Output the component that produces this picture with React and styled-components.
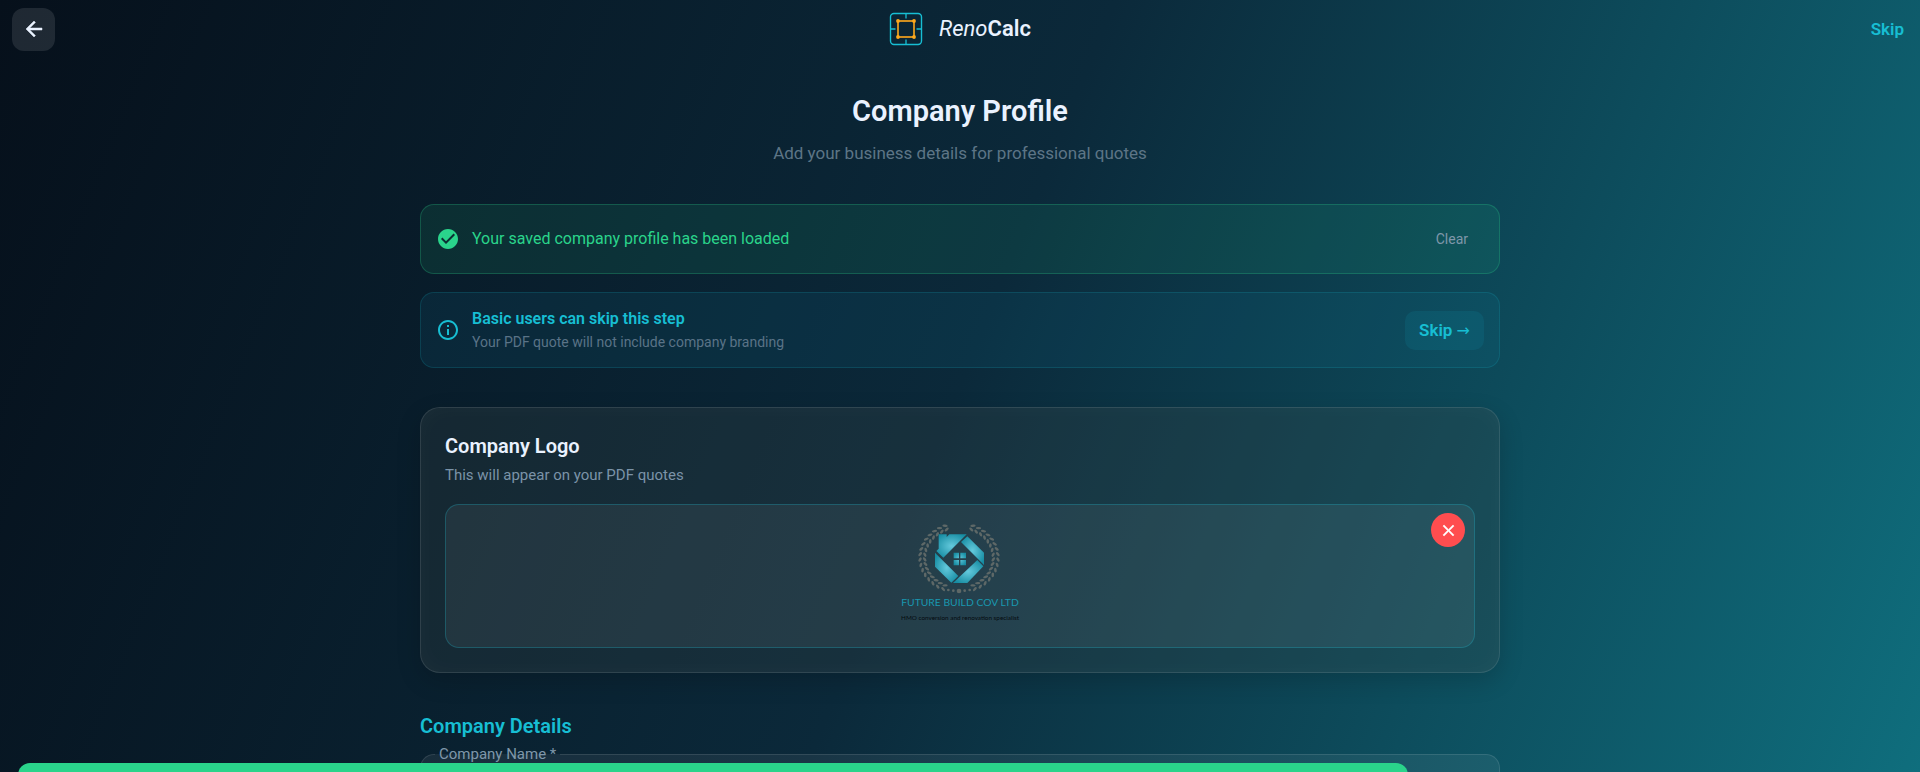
import React from 'react';
import styled, { createGlobalStyle } from 'styled-components';
import { MdArrowBack, MdCheckCircle, MdClose, MdInfoOutline } from 'react-icons/md';

const GlobalStyle = createGlobalStyle`
  * {
    box-sizing: border-box;
  }

  body {
    margin: 0;
    font-family: Roboto, 'Liberation Sans', sans-serif;
    color: #eaf2ff;
  }

  button, input {
    font-family: inherit;
  }
`;

const Page = styled.div`
  height: 100vh;
  overflow: hidden;
  background: linear-gradient(112deg, #06101b 0%, #0b293a 50%, #0f6e7d 100%);
`;

const Header = styled.header`
  display: grid;
  grid-template-columns: 1fr auto 1fr;
  align-items: center;
  height: 58px;
  padding: 0 12px;
`;

const BackButton = styled.button`
  display: flex;
  align-items: center;
  justify-content: center;
  width: 43px;
  height: 43px;
  padding: 0;
  border: none;
  border-radius: 12px;
  background: rgba(255, 255, 255, 0.1);
  color: #eaf2ff;
  font-size: 24px;
  cursor: pointer;

  path:last-child {
    stroke: currentColor;
    stroke-width: 0.5;
  }
`;

const Brand = styled.div`
  display: flex;
  align-items: center;
  gap: 16px;
`;

const BrandName = styled.span`
  font-size: 22px;
  line-height: 28px;
  font-weight: 600;

  em {
    font-weight: 400;
  }
`;

const SkipLink = styled.a`
  justify-self: end;
  padding: 4px;
  font-size: 17px;
  font-weight: 600;
  color: #17bed3;
  text-decoration: none;
`;

const Main = styled.main`
  max-width: 1112px;
  margin: 0 auto;
  padding: 33px 16px;
`;

const Title = styled.h1`
  margin: 0;
  font-size: 29px;
  line-height: 40px;
  font-weight: 600;
  text-align: center;
`;

const Subtitle = styled.p`
  margin: 11px 0 40px;
  font-size: 17px;
  line-height: 22px;
  text-align: center;
  color: #5d7586;
`;

const tones = {
  success: { color: '#2ad48b', fill: 'rgba(42, 212, 139, 0.1)', line: 'rgba(42, 212, 139, 0.25)' },
  info: { color: '#17bed3', fill: 'rgba(20, 135, 172, 0.11)', line: 'rgba(23, 190, 211, 0.16)' },
};

const Notice = styled.section`
  display: flex;
  align-items: center;
  gap: 12px;
  min-height: ${({ $tone }) => ($tone === 'info' ? '76px' : '70px')};
  padding: 10px 15px;
  border: 1px solid ${({ $tone }) => tones[$tone].line};
  border-radius: 14px;
  background: ${({ $tone }) => tones[$tone].fill};
  color: ${({ $tone }) => tones[$tone].color};

  & + & {
    margin-top: 18px;
  }

  > svg {
    flex: none;
    font-size: 24px;
  }
`;

const NoticeBody = styled.div`
  flex: 1;
`;

const NoticeText = styled.p`
  margin: 0;
  font-size: 16px;
  line-height: 24px;
  font-weight: ${({ $strong }) => ($strong ? 600 : 400)};
`;

const NoticeHint = styled.p`
  margin: 0;
  font-size: 14px;
  line-height: 22px;
  color: #5a7387;
`;

const ClearButton = styled.button`
  padding: 8px 16px;
  border: none;
  background: none;
  color: #7f97aa;
  font-size: 14px;
  cursor: pointer;
`;

const SkipButton = styled.button`
  height: 39px;
  padding: 0 14px;
  border: none;
  border-radius: 10px;
  background: rgba(23, 190, 211, 0.1);
  color: #17bed3;
  font-size: 17px;
  font-weight: 600;
  cursor: pointer;

  span {
    font-family: 'DejaVu Sans', sans-serif;
    font-size: 16px;
    font-weight: 400;
  }
`;

const Card = styled.section`
  margin-top: 39px;
  padding: 24px;
  border: 1px solid rgba(255, 255, 255, 0.11);
  border-radius: 20px;
  background: rgba(60, 70, 73, 0.25);
  box-shadow: 0 8px 24px rgba(0, 0, 0, 0.16), inset 0 0 24px rgba(255, 255, 255, 0.03);
`;

const CardTitle = styled.h2`
  margin: 0;
  font-size: 20px;
  line-height: 28px;
  font-weight: 600;
`;

const CardHint = styled.p`
  margin: 3px 0 17px;
  font-size: 15px;
  line-height: 24px;
  color: #7b93a8;
`;

const LogoBox = styled.div`
  position: relative;
  display: flex;
  justify-content: center;
  padding: 16px;
  border: 1px solid rgba(23, 190, 211, 0.27);
  border-radius: 14px;
  background: rgba(255, 255, 255, 0.06);
`;

const RemoveButton = styled.button`
  position: absolute;
  top: 8px;
  right: 9px;
  display: flex;
  align-items: center;
  justify-content: center;
  width: 34px;
  height: 34px;
  padding: 0;
  border: none;
  border-radius: 50%;
  background: #ff4d4f;
  color: #fff;
  font-size: 19px;
  cursor: pointer;

  path:last-child {
    stroke: currentColor;
    stroke-width: 0.6;
  }
`;

const SectionTitle = styled.h2`
  margin: 39px 0 4px;
  font-size: 20px;
  line-height: 28px;
  font-weight: 600;
  color: #17bed3;
`;

const Field = styled.fieldset`
  min-width: 0;
  margin: 0;
  padding: 0 14px 12px;
  border: 1px solid rgba(255, 255, 255, 0.11);
  border-radius: 14px;
  background: rgba(255, 255, 255, 0.06);

  legend {
    padding: 0 4px;
    font-size: 15px;
    line-height: 20px;
    color: #7f97aa;
  }

  input {
    width: 100%;
    height: 36px;
    padding: 0 4px;
    border: none;
    outline: none;
    background: none;
    color: #eaf2ff;
    font-size: 16px;
  }
`;

const Snackbar = styled.div`
  position: fixed;
  left: 18px;
  right: 512px;
  bottom: -39px;
  height: 48px;
  border-radius: 12px;
  background: #2ad48b;
`;

const BrandIcon = () => (
  <svg width="34" height="34" viewBox="0 0 34 34" fill="none" aria-hidden="true">
    <rect x="1.5" y="1.5" width="31" height="31" rx="3.5" stroke="#17bed3" strokeWidth="1.4" />
    <path d="M17 2v4.5M17 27.5v4.5M2 17h4.5M27.5 17h4.5" stroke="#17bed3" strokeWidth="1.3" />
    <rect x="9" y="9" width="16" height="16" stroke="#ffa81c" strokeWidth="1.6" />
    <g fill="#ffa81c">
      <circle cx="9" cy="9" r="1.9" />
      <circle cx="25" cy="9" r="1.9" />
      <circle cx="9" cy="25" r="1.9" />
      <circle cx="25" cy="25" r="1.9" />
    </g>
  </svg>
);

// angles of the leaf pairs on the left branch, measured from straight down
const leafAngles = Array.from({ length: 16 }, (_, i) => 24 + i * 9);

const Branch = ({ mirrored }) => (
  <g transform={mirrored ? 'translate(474 0) scale(-1 1)' : undefined}>
    {leafAngles.map((angle) => (
      <g key={angle} transform={`rotate(${angle} 237 172)`}>
        <ellipse cx="237" cy="289" rx="8" ry="4" transform="rotate(28 237 289)" />
        <ellipse cx="237" cy="275" rx="8" ry="4" transform="rotate(-28 237 275)" />
      </g>
    ))}
  </g>
);

const CompanyLogo = () => (
  <svg width="120" height="110" viewBox="60 62 360 330" role="img" aria-label="Company logo">
    <defs>
      <radialGradient id="band" cx="0.5" cy="0.5" r="0.6">
        <stop offset="0" stopColor="#64c9dc" />
        <stop offset="1" stopColor="#168ca2" />
      </radialGradient>
    </defs>
    <g fill="#5e6867">
      <g transform="translate(0 21) scale(1 0.88)">
        <Branch />
        <Branch mirrored />
      </g>
      <circle cx="205" cy="269" r="4" />
      <circle cx="220" cy="271" r="4" />
      <circle cx="237" cy="272" r="7" />
      <circle cx="254" cy="271" r="4" />
      <circle cx="269" cy="269" r="4" />
    </g>
    <g fill="url(#band)">
      <path d="M176 102h24v8l8-8h52l-70 70-21-20 7-7z" />
      <path d="M262 108l50 49v37l-69-69z" />
      <path d="M292 179l18 19-48 50h-43z" />
      <path d="M165 157l70 70-21 20-49-48z" />
      <path d="M221 157h16v17h-16zM241 157h17v17h-17zM221 179h16v16h-16zM241 179h17v16h-17z" />
    </g>
    <text x="240" y="318" textAnchor="middle" fontFamily="Lato, sans-serif" fontSize="31" fill="#1998b0">
      FUTURE BUILD COV LTD
    </text>
    <text x="240" y="359" textAnchor="middle" fontFamily="Lato, sans-serif" fontSize="19" fill="#050b10">
      HMO conversion and renovation specialist
    </text>
  </svg>
);

const App = () => {
  return (
    <Page>
      <GlobalStyle />
      <Header>
        <BackButton type="button" aria-label="Back">
          <MdArrowBack />
        </BackButton>
        <Brand>
          <BrandIcon />
          <BrandName>
            <em>Reno</em>Calc
          </BrandName>
        </Brand>
        <SkipLink href="#skip">Skip</SkipLink>
      </Header>
      <Main>
        <Title>Company Profile</Title>
        <Subtitle>Add your business details for professional quotes</Subtitle>
        <Notice $tone="success">
          <MdCheckCircle />
          <NoticeBody>
            <NoticeText>Your saved company profile has been loaded</NoticeText>
          </NoticeBody>
          <ClearButton type="button">Clear</ClearButton>
        </Notice>
        <Notice $tone="info">
          <MdInfoOutline />
          <NoticeBody>
            <NoticeText $strong>Basic users can skip this step</NoticeText>
            <NoticeHint>Your PDF quote will not include company branding</NoticeHint>
          </NoticeBody>
          <SkipButton type="button">
            Skip <span>→</span>
          </SkipButton>
        </Notice>
        <Card>
          <CardTitle>Company Logo</CardTitle>
          <CardHint>This will appear on your PDF quotes</CardHint>
          <LogoBox>
            <CompanyLogo />
            <RemoveButton type="button" aria-label="Remove logo">
              <MdClose />
            </RemoveButton>
          </LogoBox>
        </Card>
        <SectionTitle>Company Details</SectionTitle>
        <Field>
          <legend>
            <label htmlFor="company-name">Company Name *</label>
          </legend>
          <input id="company-name" type="text" />
        </Field>
      </Main>
      <Snackbar role="status" />
    </Page>
  );
};

export default App;
